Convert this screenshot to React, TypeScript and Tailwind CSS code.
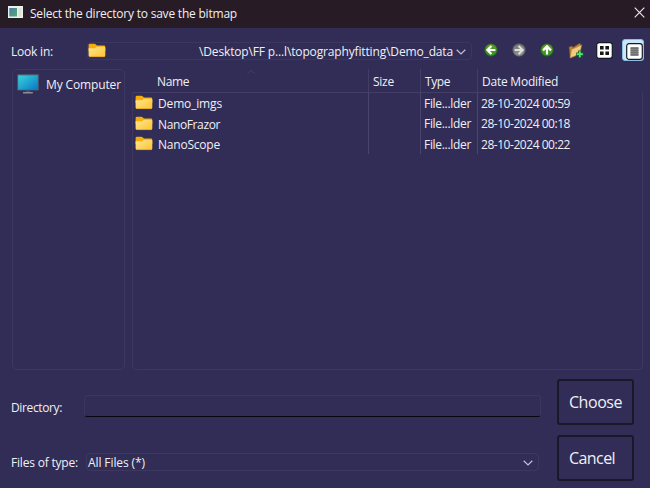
import { useLayoutEffect, useRef } from "react";

type TextProps = { children: string; w: number; className?: string };

// A single line of text whose tracking is adjusted to fill the given width.
function Fit({ children, w, className = "" }: TextProps) {
  const ref = useRef<HTMLSpanElement>(null);
  useLayoutEffect(() => {
    const el = ref.current;
    if (!el) return;
    el.style.letterSpacing = "0px";
    const natural = el.getBoundingClientRect().width;
    el.style.letterSpacing = `${(w - natural) / children.length}px`;
  }, [children, w]);
  return (
    <span ref={ref} className={`inline-block shrink-0 whitespace-pre ${className}`}>
      {children}
    </span>
  );
}

function Folder({ className = "" }: { className?: string }) {
  return (
    <svg className={`h-[15px] w-[18px] shrink-0 ${className}`} viewBox="0 0 18 15">
      <defs>
        <linearGradient id="folder" x1="0" y1="0" x2="1" y2="1">
          <stop offset="0" stopColor="#ffe594" />
          <stop offset="1" stopColor="#fdc52e" />
        </linearGradient>
      </defs>
      <path d="M.6 2Q.6.7 2 .7H6.3Q7 .7 7.6 1.3L9 2.6H16Q17.3 2.6 17.3 4V8H.6Z" fill="#f4ad0b" />
      <path d="M.6 5.3H6.5Q7.2 5.3 7.7 4.8L8.6 3.8H16Q17.3 3.8 17.3 5V12.6Q17.3 13.9 16 13.9H2Q.6 13.9 .6 12.6Z" fill="url(#folder)" />
      <path d="M1.3 13.6H16.6" stroke="#d99b1c" strokeWidth=".7" />
    </svg>
  );
}

function Arrow({ angle, from, to, rim }: { angle: number; from: string; to: string; rim: string }) {
  const id = `ball${angle}`;
  return (
    <svg className="size-[14px] shrink-0" viewBox="0 0 14 14">
      <defs>
        <linearGradient id={id} x1="0" y1="0" x2="0" y2="1">
          <stop offset="0" stopColor={from} />
          <stop offset="1" stopColor={to} />
        </linearGradient>
      </defs>
      <circle cx="7" cy="7" r="6.2" fill={`url(#${id})`} stroke={rim} strokeWidth=".8" />
      <g transform={`rotate(${angle} 7 7)`} fill="none" stroke={angle === 180 ? "#dedede" : "#fff"} strokeWidth="2.2">
        <path d="M3.6 7H11.4M7.4 3L3.4 7L7.4 11" />
      </g>
    </svg>
  );
}

function Chevron({ className = "" }: { className?: string }) {
  return (
    <svg className={`h-[6px] w-[10px] shrink-0 ${className}`} viewBox="0 0 10 6" fill="none" stroke="#c3c1d0" strokeWidth="1.2">
      <path d="M.7.8L5 5L9.3.8" />
    </svg>
  );
}

const rows = [
  { name: "Demo_imgs", w: 64, date: "28-10-2024 00:59" },
  { name: "NanoFrazor", w: 62, date: "28-10-2024 00:18" },
  { name: "NanoScope", w: 62, date: "28-10-2024 00:22" },
];

export default function App() {
  return (
    <div className="flex h-[488px] w-[650px] flex-col overflow-hidden bg-[#312d57] font-['Open_Sans',sans-serif] text-[12px] leading-[20px] text-[#f0eff5]">
      <header className="flex h-[28px] shrink-0 items-center bg-[#271c25] pr-[5px] pl-[8px]">
        <svg className="-mt-[4px] h-[12px] w-[15px] shrink-0" viewBox="0 0 15 12">
          <defs>
            <linearGradient id="app" x1="0" y1="0" x2="1" y2="1">
              <stop offset="0" stopColor="#467eae" />
              <stop offset="1" stopColor="#59a968" />
            </linearGradient>
          </defs>
          <path d="M0 0H15V12H0Z" fill="#eef0ef" />
          <path d="M1.3 2H9V10.5H1.3Z" fill="url(#app)" />
          <path d="M10.3 2H13.5V10.5H10.3Z" fill="#dce3dc" />
        </svg>
        <Fit w={207} className="ml-[7px]">Select the directory to save the bitmap</Fit>
        <svg className="-mt-[4px] ml-auto size-[11px]" viewBox="0 0 11 11" stroke="#eee" strokeWidth="1.1">
          <path d="M.7.7L10.3 10.3M10.3.7L.7 10.3" />
        </svg>
      </header>

      <div className="flex h-[41px] shrink-0 items-center pt-[4px]">
        <Fit w={42} className="mt-[2px] ml-[11px]">Look in:</Fit>
        <div className="ml-[34px] flex h-[18px] w-[385px] items-center rounded-[4px] border border-[#3d365f]">
          <Folder className="-mt-px" />
          <Fit w={254} className="mt-[2px] ml-[93px]">{"\\Desktop\\FF p...l\\topographyfitting\\Demo_data"}</Fit>
          <Chevron className="mt-[2px] ml-[3px]" />
        </div>
        <div className="-mt-[2px] ml-[12px] flex items-center">
          <Arrow angle={0} from="#67952f" to="#259b19" rim="#265a1b" />
          <div className="w-[14px]" />
          <Arrow angle={180} from="#777777" to="#919191" rim="#5a5a60" />
          <div className="w-[14px]" />
          <Arrow angle={90} from="#67952f" to="#259b19" rim="#265a1b" />
        </div>
        <svg className="-mt-px ml-[14px] h-[17px] w-[16px] shrink-0" viewBox="0 0 16 17">
          <path d="M1 5L4 4L5 5.4L11.7 1.2L12.7 2.5L12.3 12L2.2 16Z" fill="#b88439" stroke="#6e4c24" strokeWidth=".6" />
          <path d="M3.5 7.5L13.7 2.8L11.8 12L2 16Z" fill="#f4cb7c" stroke="#a3793c" strokeWidth=".6" />
          <path d="M11.8 8.5V16M8.2 12.2H15.5" stroke="#17672f" strokeWidth="3.4" />
          <path d="M11.8 9.2V15.3M8.9 12.2H14.8" stroke="#4deb72" strokeWidth="1.7" />
        </svg>
        <svg className="-mt-px ml-[12px] size-[17px] shrink-0" viewBox="0 0 17 17">
          <rect x=".7" y=".7" width="15.6" height="15.6" rx="2.4" fill="#fff" stroke="#141b24" strokeWidth="1.2" />
          <path d="M4 4H7.6V7.6H4ZM9.4 4H13V7.6H9.4ZM4 9.4H7.6V13H4ZM9.4 9.4H13V13H9.4Z" fill="#171717" />
        </svg>
        <div className="-mt-px ml-[9px] flex h-[22px] w-[22px] shrink-0 items-end justify-end rounded-[3px] border border-[#8dbde2] bg-[#c9e7fb]">
          <svg className="size-[17px]" viewBox="0 0 17 17">
            <rect x=".7" y=".7" width="15.6" height="15.6" rx="2.4" fill="#fff" stroke="#141b24" strokeWidth="1.2" />
            <path d="M4.5 4H12.5V13H4.5Z" fill="#858585" />
            <path d="M4.5 5.5H12.5M4.5 7.5H12.5M4.5 9.5H12.5M4.5 11.5H12.5" stroke="#686868" strokeWidth=".8" />
          </svg>
        </div>
      </div>

      <main className="flex h-[301px] shrink-0 gap-[7px] pl-[12px]">
        <aside className="flex w-[113px] items-start rounded-[5px] border border-[#3e3861] pt-[4px] pl-[4px]">
          <svg className="h-[20px] w-[22px] shrink-0" viewBox="0 0 22 20">
            <defs>
              <linearGradient id="screen" x1="0" y1="0" x2="1" y2="1">
                <stop offset="0" stopColor="#36d4dc" />
                <stop offset="1" stopColor="#0878c5" />
              </linearGradient>
            </defs>
            <path d="M.3.3H21.7V16.4H.3Z" fill="#536576" />
            <path d="M1.2 1.4H20.8V15.5H1.2Z" fill="url(#screen)" />
            <path d="M8.8 16.4H13V18.2H8.8Z" fill="#455164" />
            <path d="M6 18.2H15.8V19.4H6Z" fill="#a1a6ac" />
          </svg>
          <Fit w={75} className="mt-px ml-[7px]">My Computer</Fit>
        </aside>
        <section className="flex w-[511px] flex-col">
          <div className="flex h-[24px] w-[441px] shrink-0 border-b border-[#443e66]">
            <div className="flex w-[236px] pt-[3px] pl-[25px]">
              <Fit w={32}>Name</Fit>
              <svg className="mt-[-2px] ml-[58px] h-[4px] w-[8px]" viewBox="0 0 8 4" fill="none" stroke="#46405f">
                <path d="M.5 3.5L4 .5L7.5 3.5" />
              </svg>
            </div>
            <div className="w-[52px] border-l border-[#443e66] pt-[3px] pl-[4px]"><Fit w={21}>Size</Fit></div>
            <div className="w-[57px] border-l border-[#443e66] pt-[3px] pl-[4px]"><Fit w={25}>Type</Fit></div>
            <div className="border-l border-[#443e66] pt-[3px] pl-[4px]"><Fit w={76}>Date Modified</Fit></div>
          </div>
          <div className="-mt-px flex-1 rounded-b-[5px] border border-t-0 border-[#3e3861] pt-px">
            {rows.map((row) => (
              <div key={row.name} className="flex h-[20.35px]">
                <div className="flex w-[235px] items-center pt-[2px] pl-[2px]">
                  <Folder className="-mt-[3px]" />
                  <Fit w={row.w} className="ml-[5px]">{row.name}</Fit>
                </div>
                <div className="w-[52px] border-l border-[#4a456c]" />
                <div className="w-[57px] border-l border-[#4a456c] pt-px pl-[3px]"><Fit w={47}>File...lder</Fit></div>
                <div className="border-l border-[#4a456c] pt-px pl-[3px]"><Fit w={89}>{row.date}</Fit></div>
              </div>
            ))}
          </div>
        </section>
      </main>

      <footer className="flex flex-1 pt-[9px]">
        <div className="w-[557px]">
          <div className="mt-[16px] flex h-[23px] items-center">
            <Fit w={51} className="mt-[2px] ml-[11px]">Directory:</Fit>
            <div className="-mt-px ml-[22px] h-[22px] w-[457px] rounded-[3px] border border-b-[#09070e] border-[#3c365f]" />
          </div>
          <div className="mt-[35px] flex h-[18px] items-center">
            <Fit w={67} className="mt-[2px] ml-[11px]">Files of type:</Fit>
            <div className="ml-[8px] flex h-[18px] w-[453px] items-center rounded-[4px] border border-[#3e3861] pr-[5px] pl-px">
              <Fit w={57} className="mt-[2px]">All Files (*)</Fit>
              <Chevron className="mt-[2px] ml-auto" />
            </div>
          </div>
        </div>
        <div className="flex flex-col gap-[10px] text-[16px]">
          <button className="flex h-[46px] w-[77px] items-center rounded-[3px] border-2 border-[#1a1729] pl-[10px]"><Fit w={53}>Choose</Fit></button>
          <button className="flex h-[46px] w-[77px] items-center rounded-[3px] border-2 border-[#1a1729] pl-[10px]"><Fit w={46}>Cancel</Fit></button>
        </div>
      </footer>
    </div>
  );
}
